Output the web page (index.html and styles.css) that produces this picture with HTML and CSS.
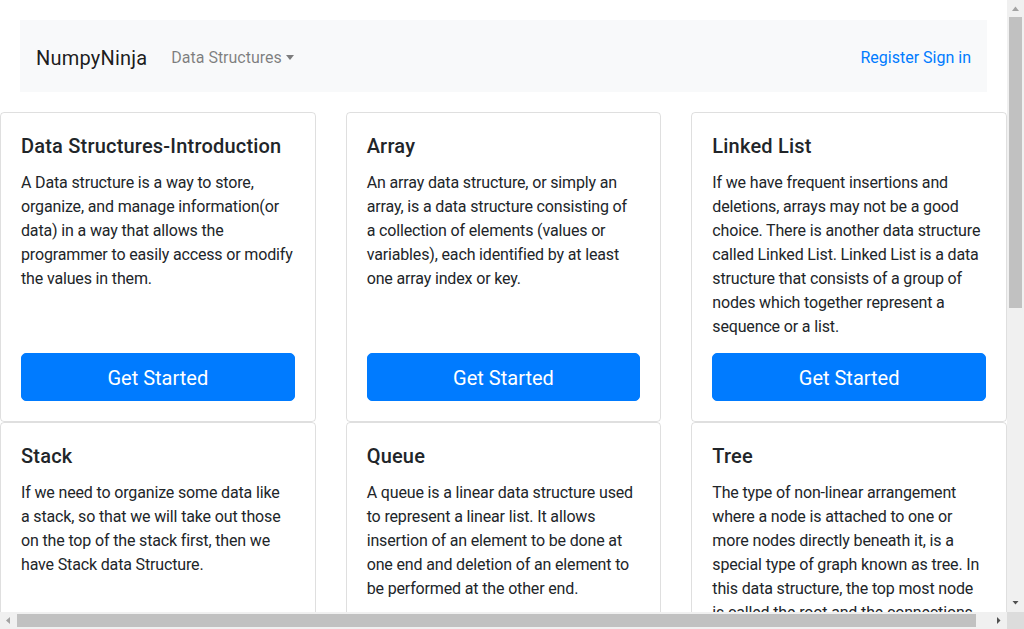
FILE: index.html
```html
<!DOCTYPE html>
<html lang="en">
<head>
<meta charset="utf-8">
<title>NumpyNinja</title>
<link rel="stylesheet" href="styles.css">
</head>
<body>
<div class="window">
  <div class="viewport">
    <div class="page">
      <nav class="navbar">
        <a class="brand" href="#">NumpyNinja</a>
        <a class="nav-dropdown" href="#">Data Structures<span class="caret"></span></a>
        <div class="nav-right">
          <a href="#">Register</a> <a href="#">Sign in</a>
        </div>
      </nav>
      <div class="row">
        <div class="col"><div class="card"><h5 class="card-title">Data Structures-Introduction</h5><p class="card-text">A Data structure is a way to store,<br>organize, and manage information(or<br>data) in a way that allows the<br>programmer to easily access or modify<br>the values in them.</p><a class="btn" href="#">Get Started</a></div></div>
        <div class="col"><div class="card"><h5 class="card-title">Array</h5><p class="card-text">An array data structure, or simply an<br>array, is a data structure consisting of<br>a collection of elements (values or<br>variables), each identified by at least<br>one array index or key.</p><a class="btn" href="#">Get Started</a></div></div>
        <div class="col"><div class="card"><h5 class="card-title">Linked List</h5><p class="card-text">If we have frequent insertions and<br>deletions, arrays may not be a good<br>choice. There is another data structure<br>called Linked List. Linked List is a data<br>structure that consists of a group of<br>nodes which together represent a<br>sequence or a list.</p><a class="btn" href="#">Get Started</a></div></div>
        <div class="col"><div class="card"><h5 class="card-title">Stack</h5><p class="card-text">If we need to organize some data like<br>a stack, so that we will take out those<br>on the top of the stack first, then we<br>have Stack data Structure.</p><a class="btn" href="#">Get Started</a></div></div>
        <div class="col"><div class="card"><h5 class="card-title">Queue</h5><p class="card-text">A queue is a linear data structure used<br>to represent a linear list. It allows<br>insertion of an element to be done at<br>one end and deletion of an element to<br>be performed at the other end.</p><a class="btn" href="#">Get Started</a></div></div>
        <div class="col"><div class="card"><h5 class="card-title">Tree</h5><p class="card-text">The type of non-linear arrangement<br>where a node is attached to one or<br>more nodes directly beneath it, is a<br>special type of graph known as tree. In<br>this data structure, the top most node<br>is called the root and the connections<br>between nodes are called edges.</p><a class="btn" href="#">Get Started</a></div></div>
        <div class="col"><div class="card"><h5 class="card-title">Graph</h5><p class="card-text">A graph is a non-linear data structure<br>consisting of vertices and edges.</p><a class="btn" href="#">Get Started</a></div></div>
      </div>
    </div>
  </div>
  <div class="vscroll">
    <div class="sb-btn"><svg width="17" height="17" viewBox="0 0 17 17"><path d="M5 11 L8.5 6.5 L12 11 Z" fill="#a3a3a3"/></svg></div>
    <div class="sb-track"><div class="sb-thumb v"></div></div>
    <div class="sb-btn"><svg width="17" height="17" viewBox="0 0 17 17"><path d="M5.5 6 L8.5 9.5 L11.5 6 Z" fill="#505050"/></svg></div>
  </div>
  <div class="hscroll">
    <div class="sb-btn"><svg width="17" height="17" viewBox="0 0 17 17"><path d="M10 5 L6 8.5 L10 12 Z" fill="#a3a3a3"/></svg></div>
    <div class="sb-track"><div class="sb-thumb h"></div></div>
    <div class="sb-btn"><svg width="17" height="17" viewBox="0 0 17 17"><path d="M7 5 L10.5 8.5 L7 12 Z" fill="#505050"/></svg></div>
  </div>
  <div class="corner"></div>
</div>
</body>
</html>
```
FILE: styles.css
```css
html, body {
  margin: 0;
  padding: 0;
  overflow: hidden;
}
body {
  font-family: Roboto, "Noto Sans", Arial, sans-serif;
  font-size: 16px;
  line-height: 1.5;
  color: #212529;
  background: #fff;
}
.window {
  width: 1024px;
  height: 629px;
  display: grid;
  grid-template-columns: 1007px 17px;
  grid-template-rows: 612px 17px;
}
.viewport {
  overflow: hidden;
}
.page {
  width: 1007px;
  padding-top: 20px;
}
a { text-decoration: none; color: #007bff; }
.navbar {
  margin: 0 20px 20px;
  background: #f8f9fa;
  padding: 18px 16px 14px;
  display: flex;
  align-items: center;
}
.brand {
  font-size: 20px;
  line-height: 30px;
  padding: 5px 0;
  margin-right: 16px;
  color: rgba(0,0,0,.9);
  letter-spacing: 0.2px;
}
.nav-dropdown {
  padding: 8px;
  color: rgba(0,0,0,.5);
  display: flex;
  align-items: center;
}
.caret {
  display: inline-block;
  margin-left: 4px;
  border-top: 5px solid;
  border-left: 4px solid transparent;
  border-right: 4px solid transparent;
  margin-top: -1px;
}
.nav-right { margin-left: auto; }
.row {
  display: flex;
  flex-wrap: wrap;
  margin: 0 -15px;
}
.col {
  flex: 0 0 33.333333%;
  box-sizing: border-box;
  padding: 0 15px;
  display: flex;
}
.card {
  flex: 1;
  min-width: 0;
  display: flex;
  flex-direction: column;
  border: 1px solid rgba(0,0,0,.125);
  border-radius: 4px;
  padding: 20px;
}
.card-title {
  margin: 0 0 13px;
  padding-top: 1px;
  font-size: 20px;
  font-weight: 500;
  line-height: 24px;
  letter-spacing: 0.2px;
}
.card-text {
  margin: 0 0 14px;
  white-space: nowrap;
  letter-spacing: -0.15px;
}
.btn {
  margin-top: auto;
  display: block;
  background: #007bff;
  color: #fff;
  text-align: center;
  font-size: 20px;
  line-height: 30px;
  padding: 9px 16px 7px;
  border: 1px solid #007bff;
  border-radius: 5px;
}
.vscroll, .hscroll {
  background: #f0f0f0;
  display: flex;
}
.vscroll { flex-direction: column; }
.sb-btn { flex: 0 0 17px; width: 17px; height: 17px; }
.sb-btn svg { display: block; }
.sb-track { flex: 1; display: flex; }
.vscroll .sb-track { flex-direction: column; }
.sb-thumb { background: #c1c1c1; }
.sb-thumb.v { height: 291px; margin: 0 2px; }
.sb-thumb.h { width: 959px; margin: 2px 0; }
.corner { background: #dcdcdc; }
```
